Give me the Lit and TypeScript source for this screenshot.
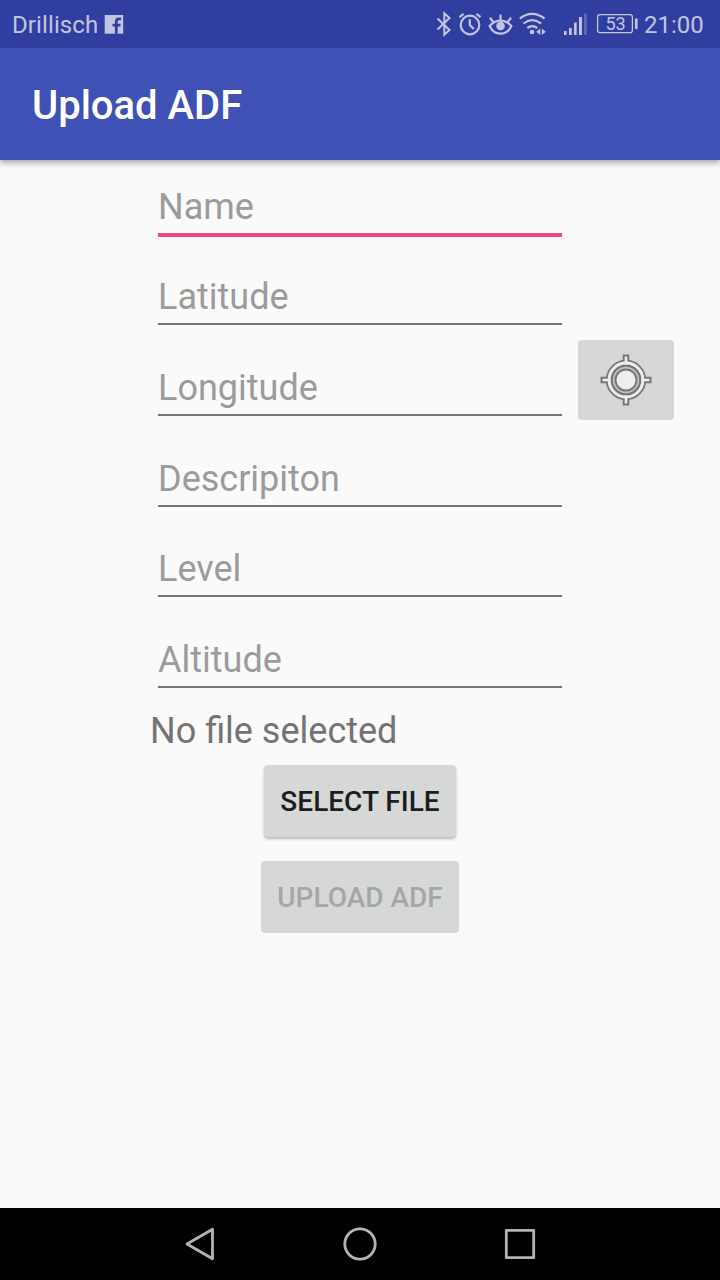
import { LitElement, html, css, svg } from "lit";
import { customElement, property } from "lit/decorators.js";

@customElement("status-bar")
class StatusBar extends LitElement {
  static styles = css`
    :host { display: flex; height: 48px; background: #303f9f; color: #c1c5e2; font-size: 24px; line-height: 51px; padding: 0 16px 0 12px; box-sizing: border-box; }
    svg { display: block; flex: none; height: 48px; }
    .carrier { width: 86px; margin-right: 6px; white-space: nowrap; letter-spacing: 0.1px; }
    .fb { width: 20px; }
    .spacer { flex: 1; }
    .icons { width: 216px; }
    .time { width: 60px; white-space: nowrap; }
    .pct { font-family: Roboto, sans-serif; font-size: 18px; }
  `;
  render() {
    return html`
      <span class="carrier">Drillisch</span>
      <svg class="fb" viewBox="104 0 20 48">
        <path fill="#c1c5e2" d="M104.700 15h18.500v18.700h-18.500z" />
        <path fill="none" stroke="#303f9f" stroke-width="2.700" d="M116.300 33.700V21.600q0-2.800 2.800-2.800h2M112.500 25.200h8" />
      </svg>
      <span class="spacer"></span>
      <svg class="icons" viewBox="428 0 216 48" fill="none" stroke="#c1c5e2" stroke-width="2">
        ${svg`
        <path d="M437.500 18.500l12 11.500-5.200 4.700V13.300l5.200 4.700-12 11.500" />
        <circle cx="470" cy="25" r="9.300" stroke-width="2.200" />
        <path d="M469.800 19.300v5.700l4 4M459.500 17.200l4-3.300M480.500 17.200l-4-3.300" stroke-width="2.200" />
        <path d="M489.700 26c6-7.300 15.600-7.300 21.600 0-4.500 10.200-17.100 10.200-21.600 0zM500.500 20.200v-5.700M493.200 21.700l-3.300-4M507.800 21.700l3.300-4" stroke-width="2.200" />
        <circle cx="500.500" cy="26" r="4.300" fill="#c1c5e2" stroke="none" />
        <path d="M519.800 18.500q12.200-9.200 24.800 0M523.500 23.500q8.700-6.700 17.500 0M527.300 28q5-3.800 10 0" stroke-width="2.200" />
        <circle cx="532" cy="32" r="2.300" fill="#c1c5e2" stroke="none" />
        <path d="M540.200 28.500v6.500l-4-3.200zM541.800 28.500v6.500l4-3.200z" fill="#c1c5e2" stroke="none" />
        <path d="M564 31h2.600v4H564zM569 28h2.700v7H569zM574 22.500h2.700V35H574zM579 17h2.900v18H579z" fill="#c1c5e2" stroke="none" />
        <path d="M584 13.500h2.900V35H584z" fill="#5f69b4" stroke="none" />
        <rect x="597.600" y="14.700" width="34.800" height="18" rx="2.500" stroke-width="1.300" />
        <path d="M635 18.500h2.600v10.500H635z" fill="#c1c5e2" stroke="none" />
        <text class="pct" x="615.500" y="30.200" text-anchor="middle" fill="#c1c5e2" stroke="none">53</text>`}
      </svg>
      <span class="time">21:00</span>`;
  }
}

@customElement("text-field")
class TextField extends LitElement {
  @property() label = "";
  @property({ type: Boolean, reflect: true }) active = false;
  static styles = css`
    :host { display: block; height: 90.75px; padding-top: 25.3px; box-sizing: border-box; }
    .hint { height: 42px; line-height: 42px; font-size: 36px; color: #9b9b9b; white-space: nowrap; }
    .line { margin-top: 5px; height: 2px; background: #767676; }
    :host([active]) { padding-top: 26px; }
    :host([active]) .line { height: 4px; background: #f64482; }
  `;
  render() {
    return html`<div class="hint">${this.label}</div><div class="line"></div>`;
  }
}

@customElement("app-root")
class AppRoot extends LitElement {
  static styles = css`
    :host { display: flex; flex-direction: column; width: 720px; height: 1280px; background: #fafafa; font-family: Roboto, sans-serif; overflow: hidden; }
    .bar { height: 112px; box-sizing: border-box; padding: 1px 0 0 32px; line-height: 113px; background: #3f51b5; color: #fff; font-size: 40px; font-weight: 500; box-shadow: 0 3px 6px rgba(0,0,0,.33); }
    status-bar { position: relative; z-index: 1; }
    main { flex: 1; display: flex; flex-direction: column; }
    .form { display: grid; grid-template-columns: 404px 96px; column-gap: 16px; padding-left: 158px; grid-auto-rows: 90.75px; height: 544px; }
    text-field { grid-column: 1; }
    .locate { grid-column: 2; grid-row: 3; width: 96px; height: 80px; margin-top: -1.5px; }
    button { display: block; border: 0; padding: 0; border-radius: 4px; background: #d6d8d7; font: 500 28px/72px Roboto, sans-serif; height: 72px; color: #1c1d1d; }
    .status { margin-left: 150px; height: 61px; line-height: 55px; font-size: 36px; color: #737373; }
    .actions { display: flex; flex-direction: column; align-items: center; gap: 24px; }
    .select { width: 192px; box-shadow: 0 2px 3px rgba(0,0,0,.26); }
    .upload { width: 198px; color: #a5a7a6; }
    button.select, button.upload { padding-top: 1px; }
    nav { height: 72px; background: #000; }
    svg { display: block; }
  `;
  render() {
    const fields = ["Name", "Latitude", "Longitude", "Descripiton", "Level", "Altitude"];
    return html`
      <status-bar></status-bar>
      <header class="bar">Upload ADF</header>
      <main>
        <section class="form">
          ${fields.map((f, i) => html`<text-field .label=${f} ?active=${i === 0}></text-field>`)}
          <button class="locate" aria-label="Locate">
            <svg width="96" height="80" viewBox="578 340 96 80">
              <g fill="none" stroke="#777">
                <path d="M626 354.500v12M626 393.500v12M600.500 380h12M639.500 380h12" stroke-width="6.600" />
                <circle cx="626" cy="380" r="16.700" stroke-width="7" />
              </g>
              <g fill="none" stroke="#eee">
                <path d="M626 356.600v8M626 395.400v8M602.600 380h8M641.400 380h8" stroke-width="2.600" />
                <circle cx="626" cy="380" r="16.900" stroke-width="3" />
              </g>
              <circle cx="626" cy="380" r="14" fill="#c2c4c3" stroke="#777" stroke-width="1.600" />
              <circle cx="626" cy="380" r="10.500" fill="#eee" stroke="#777" stroke-width="2" />
            </svg>
          </button>
        </section>
        <div class="status">No file selected</div>
        <div class="actions">
          <button class="select">SELECT FILE</button>
          <button class="upload" disabled>UPLOAD ADF</button>
        </div>
      </main>
      <nav>
        <svg width="720" height="72" viewBox="0 1208 720 72" fill="none" stroke="#b3b3b3" stroke-width="2.800" stroke-linejoin="round">
          <path d="M212.500 1229.200v29.600l-25.500-14.800z" />
          <circle cx="360" cy="1244" r="15.200" />
          <rect x="506.300" y="1230.300" width="27.400" height="27.400" />
        </svg>
      </nav>`;
  }
}
